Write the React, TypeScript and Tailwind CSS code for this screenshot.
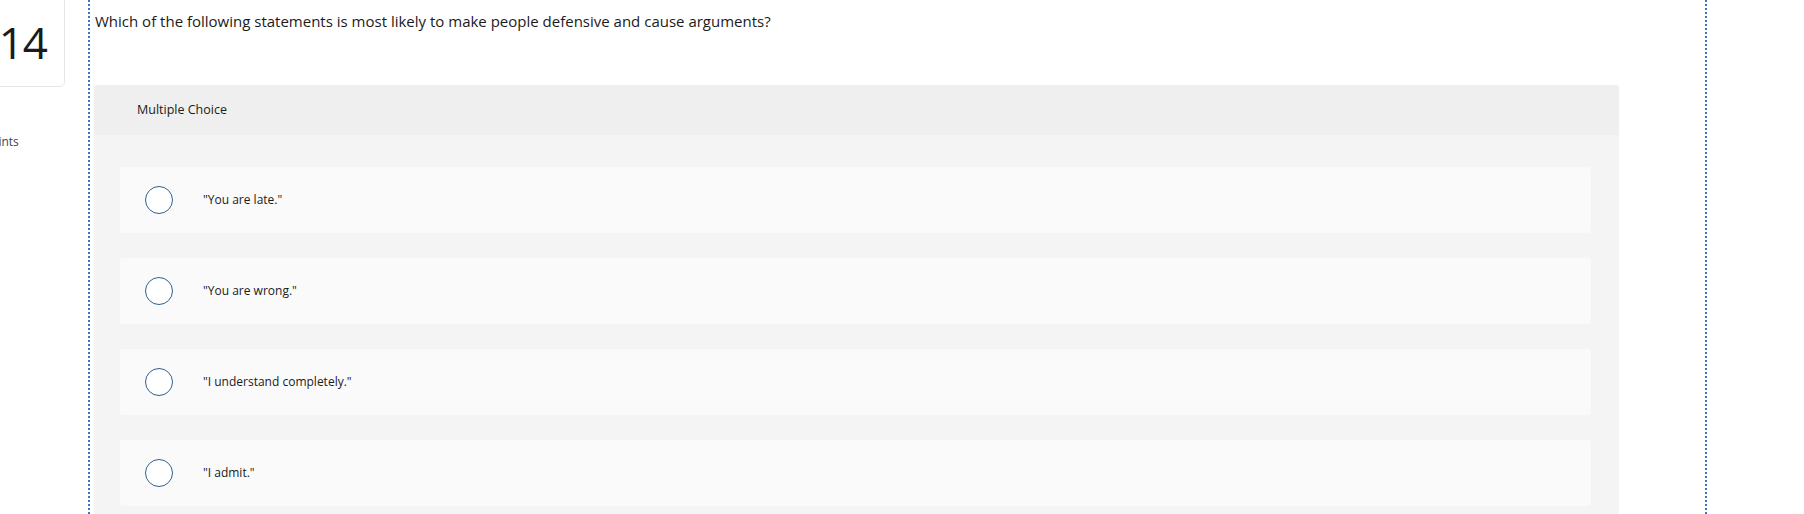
import { useState } from 'react';

const choices = [
  '"You are late."',
  '"You are wrong."',
  '"I understand completely."',
  '"I admit."',
];

export default function App() {
  const [picked, setPicked] = useState<number | null>(null);

  return (
    <div className="flex h-[514px] overflow-hidden bg-white text-[#1b1b1b]" style={{ fontFamily: '"Open Sans", "Liberation Sans", sans-serif' }}>
      {/* left rail: question number + points */}
      <div className="w-[88px] shrink-0">
        <div className="-ml-[20px] -mt-[4px] flex h-[91px] w-[85px] items-center justify-end rounded-[5px] border border-[#e6e6e6] pr-[17px]">
          <span className="text-[44px] leading-none tracking-[-1px]">14</span>
        </div>
        <div className="-ml-[16px] mt-[46px] text-[12px] text-[#444]">Points</div>
      </div>

      <div className="w-[1619px] shrink-0 border-x-2 border-dotted border-[#3a76c0] pl-[4px] pr-[86px]">
        <p className="pt-[11px] pl-[1px] text-[15px] leading-[21px]">
          Which of the following statements is most likely to make people defensive and cause arguments?
        </p>

        <div className="mt-[53px] overflow-hidden rounded-t-[3px] bg-[#f4f4f4]">
          <div className="flex h-[50px] items-center bg-[#efefef] pl-[43px] text-[12.5px]">Multiple Choice</div>
          <div className="flex flex-col gap-[25px] pl-[26px] pr-[28px] pt-[32px] pb-[10px]">
            {choices.map((c, i) => (
              <label
                key={i}
                className="flex h-[66px] cursor-pointer items-center rounded-[3px] bg-[#fafafa] pl-[25px]"
                onClick={() => setPicked(i)}
              >
                <span className={`h-[28px] w-[28px] shrink-0 rounded-full border-[1.5px] border-[#2f5f90] ${picked === i ? 'bg-[#2f5f90]' : 'bg-white'}`} />
                <span className="ml-[30px] text-[12px]">{c}</span>
              </label>
            ))}
          </div>
        </div>
      </div>
    </div>
  );
}
